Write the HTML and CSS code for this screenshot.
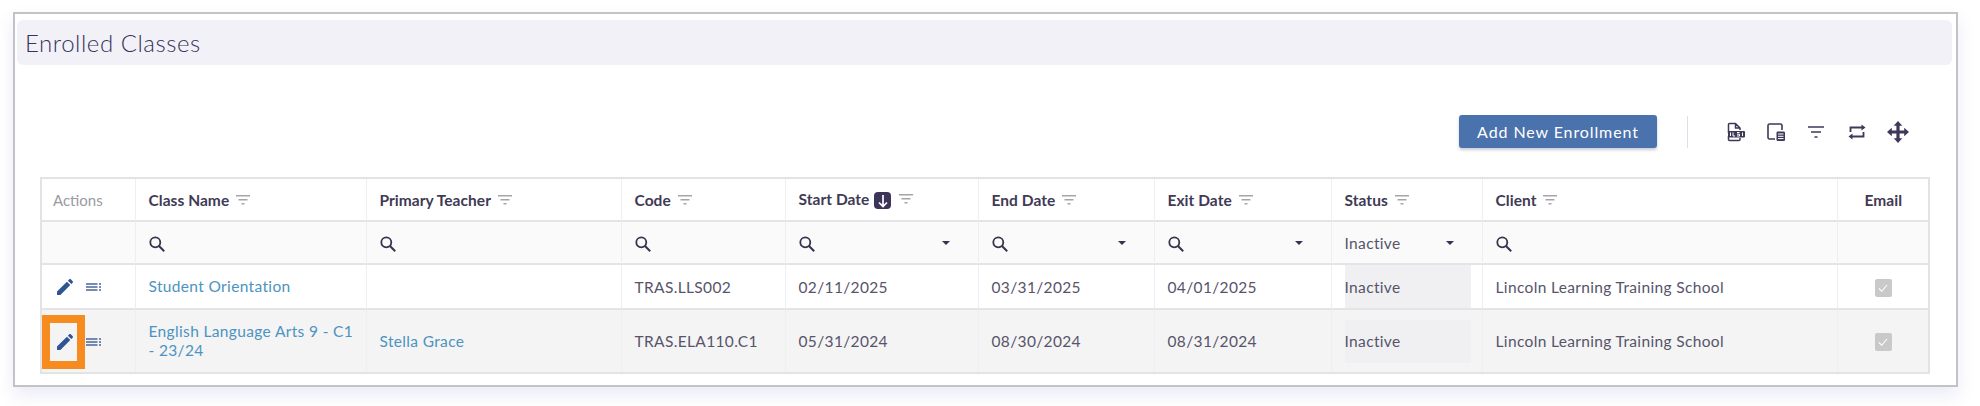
FILE: index.html
```html
<!DOCTYPE html>
<html lang="en">
<head>
<meta charset="utf-8">
<title>Enrolled Classes</title>
<link rel="stylesheet" href="styles.css">
</head>
<body>
<svg class="defs" width="0" height="0" aria-hidden="true">
  <defs>
    <symbol id="funnel" viewBox="0 0 14 10"><path d="M0 .75h14M2.5 4.75h9M5.5 8.75h3" fill="none" stroke="currentColor" stroke-width="1.3"/></symbol>
    <symbol id="search" viewBox="0 0 16 16"><circle cx="6.3" cy="6.3" r="5" fill="none" stroke="currentColor" stroke-width="1.8"/><path d="M10 10l5.2 5.2" fill="none" stroke="currentColor" stroke-width="2"/></symbol>
    <symbol id="pencil" viewBox="0 0 16 16"><path d="M0 16v-3.4L9.9 2.7l3.4 3.4L3.4 16zM10.9 1.700L12.100.5c.6-.6 1.300-.6 1.900 0l1.500 1.500c.6.6.6 1.300 0 1.900l-1.200 1.200z" fill="currentColor"/></symbol>
    <symbol id="lines" viewBox="0 0 15 8"><path d="M0 1h11.500M0 4h11.500M0 7h11.500M13 1h2M13 4h2M13 7h2" fill="none" stroke="currentColor" stroke-width="1.500"/></symbol>
  </defs>
</svg>
<main class="frame">
  <h1 class="title">Enrolled Classes</h1>
  <div class="toolbar">
    <button class="add-btn" type="button">Add New Enrollment</button>
    <span class="divider"></span>
    <div class="tools">
      <svg class="tool" viewBox="0 0 20 20"><path d="M3.5 11V2.5c0-.6.4-1 1-1h6l4.500 4.500V8M10.500 1.500V6H15M3.500 14v3.500c0 .6.4 1 1 1H14c.6 0 1-.4 1-1V16" fill="none" stroke="currentColor" stroke-width="1.500"/><rect x="3" y="9" width="17" height="6.500" rx="1" fill="currentColor"/><path d="M5.500 10.500v3.500M8 10.500v3.500h2M12 10.500h2.500M12 12.200h2.500v1.800H12M17.500 10.500v3.500" fill="none" stroke="#fff" stroke-width="1"/></svg>
      <svg class="tool" viewBox="0 0 20 20"><path d="M9 17H3.500c-.8 0-1.500-.7-1.500-1.500v-12C2 2.700 2.700 2 3.500 2h11c.8 0 1.500.7 1.500 1.500V8" fill="none" stroke="currentColor" stroke-width="1.600"/><rect x="10.500" y="9.500" width="8.500" height="9.500" rx="1.300" fill="currentColor"/><path d="M12 12h5.500M12 14.300h5.500M12 16.600h5.500" stroke="#fff" stroke-width="1"/></svg>
      <svg class="tool" viewBox="0 0 20 20"><path d="M2 5h16M5 10h10M8.500 15h3" fill="none" stroke="currentColor" stroke-width="1.700"/></svg>
      <svg class="tool" viewBox="0 0 20 20"><path d="M3.500 10V5.500H15M16.500 10v4.500H5" fill="none" stroke="currentColor" stroke-width="1.800"/><path d="M14.500 2.500l4 3-4 3zM5.500 11.500l-4 3 4 3z" fill="currentColor"/></svg>
      <svg class="tool tool-move" viewBox="0 0 22 22"><path d="M11 0l4.300 4.800h-2.700v4.600h4.600V6.700L22 11l-4.800 4.300v-2.700h-4.600v4.600h2.700L11 22l-4.300-4.800h2.700v-4.600H4.800v2.700L0 11l4.800-4.300v2.700h4.600V4.800H6.700z" fill="currentColor"/></svg>
    </div>
  </div>
  <table class="grid">
    <colgroup>
      <col class="c-actions"><col class="c-class"><col class="c-teacher"><col class="c-code"><col class="c-date"><col class="c-end"><col class="c-exit"><col class="c-status"><col class="c-client"><col class="c-email">
    </colgroup>
    <thead>
      <tr class="head">
        <th class="th-muted">Actions</th>
        <th>Class Name <svg class="funnel"><use href="#funnel"/></svg></th>
        <th>Primary Teacher <svg class="funnel"><use href="#funnel"/></svg></th>
        <th>Code <svg class="funnel"><use href="#funnel"/></svg></th>
        <th>Start Date <span class="sort"><svg viewBox="0 0 14 14" width="14" height="14"><path d="M7 1v11.500M3 8.500L7 12.500 11 8.500" fill="none" stroke="#fff" stroke-width="1.700"/></svg></span> <svg class="funnel"><use href="#funnel"/></svg></th>
        <th>End Date <svg class="funnel"><use href="#funnel"/></svg></th>
        <th>Exit Date <svg class="funnel"><use href="#funnel"/></svg></th>
        <th>Status <svg class="funnel"><use href="#funnel"/></svg></th>
        <th>Client <svg class="funnel"><use href="#funnel"/></svg></th>
        <th class="center">Email</th>
      </tr>
      <tr class="filters">
        <td></td>
        <td><svg class="search"><use href="#search"/></svg></td>
        <td><svg class="search"><use href="#search"/></svg></td>
        <td><svg class="search"><use href="#search"/></svg></td>
        <td><div class="filter-box"><svg class="search"><use href="#search"/></svg><span class="caret"></span></div></td>
        <td><div class="filter-box"><svg class="search"><use href="#search"/></svg><span class="caret"></span></div></td>
        <td><div class="filter-box"><svg class="search"><use href="#search"/></svg><span class="caret"></span></div></td>
        <td><div class="filter-box">Inactive<span class="caret"></span></div></td>
        <td><svg class="search"><use href="#search"/></svg></td>
        <td></td>
      </tr>
    </thead>
    <tbody>
      <tr class="row-a">
        <td><div class="actions"><span class="act"><svg class="pencil"><use href="#pencil"/></svg></span><svg class="lines"><use href="#lines"/></svg></div></td>
        <td><a class="link" href="#">Student Orientation</a></td>
        <td></td>
        <td>TRAS.LLS002</td>
        <td>02/11/2025</td>
        <td>03/31/2025</td>
        <td>04/01/2025</td>
        <td class="status-cell"><div class="status">Inactive</div></td>
        <td>Lincoln Learning Training School</td>
        <td class="center"><span class="check"><svg viewBox="0 0 12 12" width="12" height="12"><path d="M2 6.500l2.800 2.800L10 3" fill="none" stroke="#fff" stroke-width="1.100"/></svg></span></td>
      </tr>
      <tr class="row-b">
        <td><div class="actions"><span class="act"><svg class="pencil"><use href="#pencil"/></svg><span class="highlight"></span></span><svg class="lines"><use href="#lines"/></svg></div></td>
        <td><a class="link" href="#">English Language Arts 9 - C1 - 23/24</a></td>
        <td><a class="link" href="#">Stella Grace</a></td>
        <td>TRAS.ELA110.C1</td>
        <td>05/31/2024</td>
        <td>08/30/2024</td>
        <td>08/31/2024</td>
        <td class="status-cell"><div class="status">Inactive</div></td>
        <td>Lincoln Learning Training School</td>
        <td class="center"><span class="check"><svg viewBox="0 0 12 12" width="12" height="12"><path d="M2 6.500l2.800 2.800L10 3" fill="none" stroke="#fff" stroke-width="1.100"/></svg></span></td>
      </tr>
    </tbody>
  </table>
</main>
</body>
</html>
```
FILE: styles.css
```css
* { box-sizing: border-box; }
html, body { margin: 0; padding: 0; background: #fff; }
body {
  height: 406px;
  overflow: hidden;
  padding: 12px 22px 0 13px;
  font-family: "Lato", "Noto Sans", sans-serif;
  font-size: 15.5px;
  letter-spacing: .35px;
  color: #57546a;
}
.defs { position: absolute; }
.frame {
  height: 375px;
  border: 2px solid #c3c3c6;
  background: #fff;
  box-shadow: 0 8px 16px rgba(110, 110, 200, .14);
  padding: 6px 4px 13px 2px;
}
.title {
  margin: 0;
  height: 45px;
  display: flex;
  align-items: center;
  padding-left: 8px;
  border-radius: 6px;
  background: #f2f1f8;
  font-size: 24px;
  font-weight: 300;
  letter-spacing: .55px;
  color: #37325a;
}
.toolbar {
  display: flex;
  align-items: center;
  height: 33px;
  margin-top: 50px;
  padding-right: 43px;
  justify-content: flex-end;
}
.add-btn {
  width: 198px;
  height: 33px;
  border: 0;
  border-radius: 3px;
  background: #4a72ad;
  box-shadow: 0 2px 3px rgba(40, 50, 90, .25);
  color: #fff;
  font: inherit;
  font-size: 16px;
  letter-spacing: .9px;
}
.divider {
  width: 1px;
  height: 32px;
  margin: 0 37px 0 30px;
  background: #dcdfea;
}
.tools { display: flex; align-items: center; gap: 20.5px; color: #3f3859; }
.tool { width: 20px; height: 20px; display: block; }
.tool-move { width: 22px; height: 22px; }
.grid {
  width: 1888px;
  margin: 29px 0 0 23px;
  table-layout: fixed;
  border-collapse: separate;
  border-spacing: 0;
  border: 2px solid #e3e3e6;
}
.c-actions { width: 94px; }
.c-class { width: 231px; }
.c-teacher { width: 255px; }
.c-code { width: 164px; }
.c-date { width: 193px; }
.c-end { width: 176px; }
.c-exit { width: 177px; }
.c-status { width: 151px; }
.c-client { width: 355px; }
.c-email { width: 90px; }
th, td {
  padding: 0 12px 0 12.5px;
  text-align: left;
  vertical-align: middle;
  border-right: 1px solid #eeeef5;
}
th:last-child, td:last-child { border-right: 0; }
.head th {
  height: 43px;
  border-bottom: 2px solid #e4e4e7;
  font-weight: 700;
  font-size: 15.5px;
  letter-spacing: .05px;
  color: #3f3a55;
  white-space: nowrap;
}
.head .th-muted { padding-left: 11px; font-size: 15px; letter-spacing: 0; font-weight: 400; color: #9a9a9f; }
.center { text-align: center; }
th.center { text-align: center; }
.funnel { width: 14px; height: 10px; margin-left: 3px; color: #a5a5a9; vertical-align: 1px; }
.sort {
  display: inline-flex;
  align-items: center;
  justify-content: center;
  width: 17px;
  height: 17px;
  margin: 0 1px;
  border-radius: 4px;
  background: #3d3558;
  vertical-align: -3px;
}
.filters td {
  height: 43px;
  padding-top: 1px;
  background: #fafafa;
  border-bottom: 2px solid #e4e4e7;
}
.search { width: 16px; height: 16px; display: block; margin-top: 2px; color: #38324f; }
.filter-box { display: flex; align-items: center; justify-content: space-between; padding-right: 16px; }
.caret {
  width: 0;
  height: 0;
  border-left: 4px solid transparent;
  border-right: 4px solid transparent;
  border-top: 4.500px solid #38324f;
}
.row-a td { height: 44px; border-bottom: 2px solid #e4e4e7; }
.row-b td { height: 62px; background: #f4f4f5; }
.actions { display: flex; align-items: center; gap: 13px; padding: 1px 0 0 2.5px; }
.act { position: relative; display: block; width: 16px; height: 16px; }
.pencil { width: 16px; height: 16px; display: block; color: #2f5596; }
.lines { width: 15px; height: 8px; display: block; color: #4a6595; }
.highlight {
  position: absolute;
  left: -15px;
  top: -19px;
  width: 43px;
  height: 54px;
  border: 8px solid #f68b1f;
}
.link { color: #4c93c0; text-decoration: none; line-height: 19px; display: block; }
.status-cell { padding: 0 11px 0 12.5px; }
.status { height: 43px; display: flex; align-items: center; background: #f0f0f2; }
.check {
  display: inline-flex;
  align-items: center;
  justify-content: center;
  width: 17px;
  height: 18px;
  border-radius: 2px;
  background: #c9c9c9;
  vertical-align: middle;
}
```
